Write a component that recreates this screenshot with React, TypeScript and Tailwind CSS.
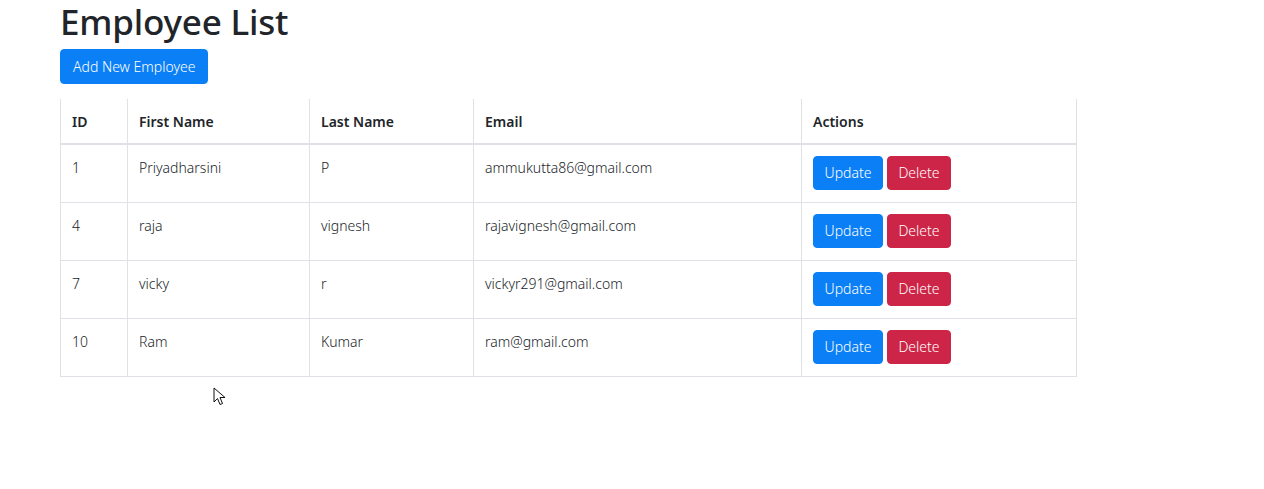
const employees = [
  { id: 1, firstName: "Priyadharsini", lastName: "P", email: "ammukutta86@gmail.com" },
  { id: 4, firstName: "raja", lastName: "vignesh", email: "rajavignesh@gmail.com" },
  { id: 7, firstName: "vicky", lastName: "r", email: "vickyr291@gmail.com" },
  { id: 10, firstName: "Ram", lastName: "Kumar", email: "ram@gmail.com" },
];

function Cursor() {
  return (
    <svg className="absolute left-[213px] top-[387px]" width="13" height="20" viewBox="0 0 13 20">
      <path d="M1 1 L1 15 L4.5 11.5 L7 17.5 L9.5 16.5 L7 10.5 L12 10.5 Z" fill="#fff" stroke="#111" strokeWidth="1" strokeLinejoin="round" />
    </svg>
  );
}

export default function App() {
  return (
    <div className="relative min-h-[489px] bg-white text-[#212529] font-['Noto_Sans',sans-serif]">
      <div className="pl-[60px] w-[1076px]">
        <h1 className="text-[35px] leading-[44px] font-medium tracking-[-0.2px]">Employee List</h1>
        <button className="mt-[5px] h-[35px] px-[12px] rounded-[4px] bg-[#0b7ff6] border border-[#0b7ff6] text-white text-[14px] leading-[20px] font-light">
          Add New Employee
        </button>

        <table className="mt-[15px] w-[1016px] table-fixed border-collapse text-[14px] leading-[20px]">
          <colgroup>
            <col className="w-[67px]" />
            <col className="w-[182px]" />
            <col className="w-[164px]" />
            <col className="w-[328px]" />
            <col className="w-[275px]" />
          </colgroup>
          <thead>
            <tr className="border-b-2 border-[#dee2e6]">
              {["ID", "First Name", "Last Name", "Email", "Actions"].map((h) => (
                <th key={h} className="border-x border-[#dee2e6] px-[11px] pt-[13px] pb-[11px] text-left font-semibold">
                  {h}
                </th>
              ))}
            </tr>
          </thead>
          <tbody>
            {employees.map((e) => (
              <tr key={e.id} className="border-b border-[#dee2e6]">
                <td className="border-x border-[#dee2e6] px-[11px] pt-[13px] pb-[11px] align-top font-light">{e.id}</td>
                <td className="border-x border-[#dee2e6] px-[11px] pt-[13px] pb-[11px] align-top font-light">{e.firstName}</td>
                <td className="border-x border-[#dee2e6] px-[11px] pt-[13px] pb-[11px] align-top font-light">{e.lastName}</td>
                <td className="border-x border-[#dee2e6] px-[11px] pt-[13px] pb-[11px] align-top font-light">{e.email}</td>
                <td className="border-x border-[#dee2e6] px-[11px] pt-[11px] pb-[12px] align-top">
                  <div className="flex gap-[4px]">
                    <button className="h-[34px] w-[70px] rounded-[4px] bg-[#0b7ff6] border border-[#0b7ff6] text-white text-[14px] font-light">
                      Update
                    </button>
                    <button className="h-[34px] w-[64px] rounded-[4px] bg-[#cd2547] border border-[#cd2547] text-white text-[14px] font-light">
                      Delete
                    </button>
                  </div>
                </td>
              </tr>
            ))}
          </tbody>
        </table>
      </div>
      <Cursor />
    </div>
  );
}
